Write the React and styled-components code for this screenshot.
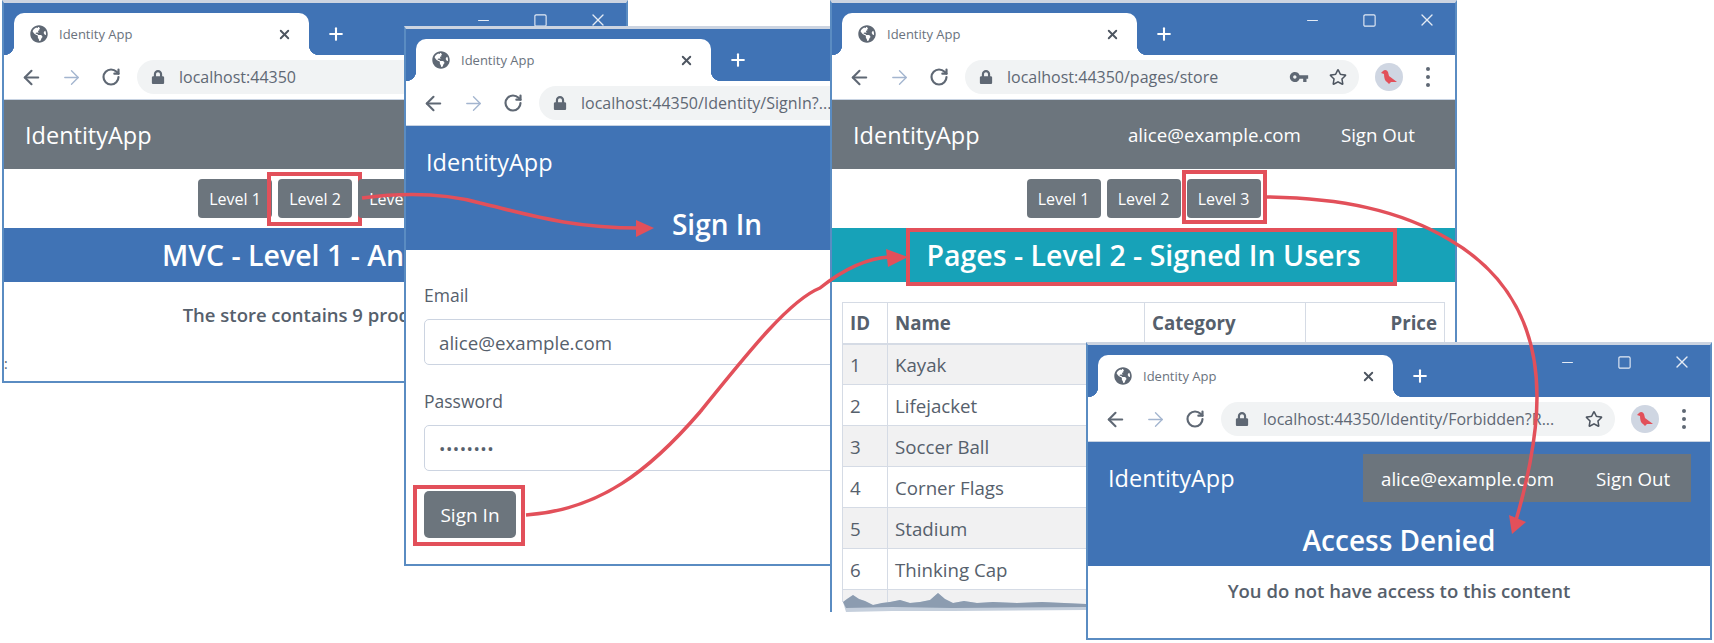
import React from 'react';
import styled, { createGlobalStyle } from 'styled-components';
import { FaGlobeAmericas, FaLock, FaRegStar } from 'react-icons/fa';
import { MdVpnKey } from 'react-icons/md';
import { ArrowLeft, ArrowRight, RotateCw, Plus, X, Minus, Square } from 'lucide-react';

const BLUE = '#4073b5';
const GRAY = '#6c757d';
const TEAL = '#17a2b8';
const TEXT = '#56606c';
const RED = '#e2505a';

const GlobalStyle = createGlobalStyle`
  html, body {
    margin: 0;
    background: #fff;
    overflow: hidden;
  }
  body {
    font-family: "Open Sans", "Noto Sans", sans-serif;
    color: ${TEXT};
  }
`;

function Bird() {
  return (
    <svg width="20" height="18" viewBox="0 0 20 18">
      <path d="M4 3 C6 1 8 2 9 4 L10 8 L18 14 L12 14 L10 16 L8 14 C6 13 5 10 5 6 L2 5 Z" fill={RED} />
    </svg>
  );
}

function Browser({ left, top, width, height, url, layer, hasProfile, hasKey, torn, children }) {
  return (
    <Window $left={left} $top={top} $width={width} $height={height} $layer={layer} $torn={torn}>
      <TitleBar>
        <Tab>
          <FaGlobeAmericas size={18} color="#5f6874" />
          <TabTitle>Identity App</TabTitle>
          <X size={15} strokeWidth={3} color="#4d5560" />
        </Tab>
        <NewTab>
          <Plus size={20} strokeWidth={2.5} color="#fff" />
        </NewTab>
        <Controls>
          <Control>
            <Minus size={17} strokeWidth={1.6} color="#e4ebf5" />
          </Control>
          <Control>
            <Square size={15} strokeWidth={1.8} color="#e4ebf5" />
          </Control>
          <Control>
            <X size={20} strokeWidth={1.6} color="#e4ebf5" />
          </Control>
        </Controls>
      </TitleBar>
      <Toolbar>
        <ToolIcon>
          <ArrowLeft size={23} strokeWidth={2.2} color="#5f6874" />
        </ToolIcon>
        <ToolIcon>
          <ArrowRight size={23} strokeWidth={1.4} color="#a3b5cf" />
        </ToolIcon>
        <ToolIcon>
          <RotateCw size={20} strokeWidth={2.6} color="#5f6874" />
        </ToolIcon>
        <Omnibox $full={!hasProfile}>
          <FaLock size={14} color="#5f6874" />
          <Url>{url}</Url>
          {hasKey && <MdVpnKey size={20} color="#5f6874" />}
          {hasProfile && (
            <StarSlot>
              <FaRegStar size={18} color="#4d5560" />
            </StarSlot>
          )}
        </Omnibox>
        {hasProfile && (
          <>
            <Avatar>
              <Bird />
            </Avatar>
            <Kebab>
              <i />
              <i />
              <i />
            </Kebab>
          </>
        )}
      </Toolbar>
      {children}
    </Window>
  );
}

function Levels({ marked }) {
  return (
    <LevelRow>
      {[1, 2, 3].map(n => (
        <LevelButton key={n}>
          Level {n}
          {marked === n && <Mark $inset={n === 2 ? '-7px -10px -8px -11px' : '-9px -6px -6px -5px'} />}
        </LevelButton>
      ))}
    </LevelRow>
  );
}

const products = ['Kayak', 'Lifejacket', 'Soccer Ball', 'Corner Flags', 'Stadium', 'Thinking Cap', ''];

const tornEdge =
  'L15 11 L21 7 L27 11 L33 13 L41 17 L50 15 L58 14 L68 12 L78 15 L88 14 L98 12 L106 5 L113 11 L121 15 L132 13 L145 15 L161 14 L185 15 L210 14 L254 16 L627 16';

export default function App() {
  return (
    <Stage>
      <GlobalStyle />

      <Browser left={2} top={0} width={626} height={383} url="localhost:44350" layer={1}>
        <NavBar $bg={GRAY}>
          <Brand>IdentityApp</Brand>
        </NavBar>
        <Levels marked={2} />
        <PageTitle $bg={BLUE} $indent={158}>MVC - Level 1 - An</PageTitle>
        <Message>The store contains 9 products</Message>
        <Stray>:</Stray>
      </Browser>

      <Browser left={404} top={26} width={626} height={540} url="localhost:44350/Identity/SignIn?..." layer={2}>
        <TallNav>
          <TallNavRow>
            <Brand>IdentityApp</Brand>
          </TallNavRow>
          <TallTitle>Sign In</TallTitle>
        </TallNav>
        <Form>
          <FieldLabel>Email</FieldLabel>
          <Field>alice@example.com</Field>
          <FieldLabel>Password</FieldLabel>
          <Field>
            <Dots>••••••••</Dots>
          </Field>
          <SubmitButton>
            Sign In
            <Mark $inset="-6px -9px -8px -11px" />
          </SubmitButton>
        </Form>
      </Browser>

      <Browser left={830} top={0} width={627} height={612} url="localhost:44350/pages/store" layer={3} hasProfile hasKey torn>
        <NavBar $bg={GRAY}>
          <Brand>IdentityApp</Brand>
          <NavLinks>
            <NavLink>alice@example.com</NavLink>
            <NavLink>Sign Out</NavLink>
          </NavLinks>
        </NavBar>
        <Levels marked={3} />
        <PageTitle $bg={TEAL}>
          <MarkedTitle>
            Pages - Level 2 - Signed In Users
            <Mark $inset="-8px -36px -12px -20px" />
          </MarkedTitle>
        </PageTitle>
        <TableWrap>
          <Table>
            <thead>
              <tr>
                <Th $w={45}>ID</Th>
                <Th $w={257}>Name</Th>
                <Th $w={161}>Category</Th>
                <Th $right>Price</Th>
              </tr>
            </thead>
            <tbody>
              {products.map((name, i) => (
                <tr key={i}>
                  <Td $odd={i % 2 === 0}>{name && i + 1}</Td>
                  <Td $odd={i % 2 === 0}>{name}</Td>
                  <Td $odd={i % 2 === 0} />
                  <Td $odd={i % 2 === 0} />
                </tr>
              ))}
            </tbody>
          </Table>
        </TableWrap>
        <Torn width="627" height="24" viewBox="0 0 627 24">
          <path d={`M0 24 L0 14 L11 14 ${tornEdge} L627 24 Z`} fill="#fff" />
          <path d={`M11 14 ${tornEdge} L627 23 L254 22 L120 23 L60 23 L14 24 Z`} fill="#c5cfdc" />
          <path d={`M11 14 ${tornEdge} L627 20 L254 19 L120 20 L60 19 L14 20 Z`} fill="#8c9cb0" />
        </Torn>
      </Browser>

      <Browser
        left={1086}
        top={342}
        width={626}
        height={298}
        url="localhost:44350/Identity/Forbidden?R..."
        layer={4}
        hasProfile
      >
        <TallNav>
          <TallNavRow>
            <Brand>IdentityApp</Brand>
            <GrayLinks>
              <NavLink>alice@example.com</NavLink>
              <NavLink>Sign Out</NavLink>
            </GrayLinks>
          </TallNavRow>
          <TallTitle>Access Denied</TallTitle>
        </TallNav>
        <Message $tight>You do not have access to this content</Message>
      </Browser>

      <Arrows width="1714" height="643" viewBox="0 0 1714 643">
        <g fill="none" stroke={RED} strokeWidth="3.5">
          <path d="M362 198 C400 193 440 192 480 203 C530 215 570 228 640 228" />
          <path d="M526 515 C600 510 650 470 700 412 C750 350 790 300 820 288 C845 268 870 258 890 257" />
          <path d="M1267 197 C1340 198 1400 210 1450 240 C1510 275 1537 330 1537 397 C1537 440 1525 490 1516 520" />
        </g>
        <g fill={RED}>
          <polygon points="636,220 654,228 636,237" />
          <polygon points="886,249 908,257 888,267" />
          <polygon points="1509,515 1526,522 1512,534" />
        </g>
      </Arrows>
    </Stage>
  );
}

const Stage = styled.div`
  position: relative;
  width: 1714px;
  height: 643px;
  overflow: hidden;
  background: #fff;
`;

const Window = styled.div`
  position: absolute;
  left: ${p => p.$left}px;
  top: ${p => p.$top}px;
  width: ${p => p.$width}px;
  height: ${p => p.$height}px;
  z-index: ${p => p.$layer};
  box-sizing: border-box;
  display: flex;
  flex-direction: column;
  overflow: hidden;
  background: #fff;
  border: 2px solid #5a8cc2;
  border-top: 3px solid #ccd4e1;
  border-bottom-width: ${p => (p.$torn ? 0 : 2)}px;
`;

const TitleBar = styled.div`
  display: flex;
  align-items: flex-end;
  flex: none;
  height: 52px;
  padding-left: 10px;
  background: ${BLUE};
`;

const Tab = styled.div`
  position: relative;
  display: flex;
  align-items: center;
  box-sizing: border-box;
  width: 295px;
  height: 42px;
  padding: 0 17px 0 16px;
  background: #fff;
  border-radius: 10px 10px 0 0;

  &::before,
  &::after {
    content: '';
    position: absolute;
    bottom: 0;
    width: 10px;
    height: 10px;
  }
  &::before {
    left: -10px;
    background: radial-gradient(circle at 0 0, ${BLUE} 10px, #fff 10.5px);
  }
  &::after {
    right: -10px;
    background: radial-gradient(circle at 100% 0, ${BLUE} 10px, #fff 10.5px);
  }
`;

const TabTitle = styled.span`
  flex: 1;
  margin-left: 11px;
  font-size: 13px;
  color: #6a727d;
`;

const NewTab = styled.div`
  display: flex;
  align-items: center;
  height: 42px;
  margin-left: 17px;
`;

const Controls = styled.div`
  display: flex;
  align-self: flex-start;
  margin-left: auto;
`;

const Control = styled.div`
  display: flex;
  align-items: center;
  justify-content: center;
  width: 57px;
  height: 34px;
`;

const Toolbar = styled.div`
  display: flex;
  align-items: center;
  flex: none;
  height: 45px;
  padding-left: 7px;
  background: #fff;
  border-bottom: 1px solid #c8d3e2;
  box-sizing: border-box;
`;

const ToolIcon = styled.div`
  display: flex;
  justify-content: center;
  width: 40px;
`;

const Omnibox = styled.div`
  display: flex;
  align-items: center;
  box-sizing: border-box;
  flex: ${p => (p.$full ? '1' : 'none')};
  width: 394px;
  height: 34px;
  margin-left: 6px;
  padding: 0 12px 0 14px;
  background: #f1f3f4;
  border-radius: 17px;
`;

const Url = styled.span`
  flex: 1;
  margin-left: 14px;
  font-size: 16px;
  white-space: nowrap;
  color: #5f6874;
`;

const StarSlot = styled.div`
  display: flex;
  margin-left: 20px;
`;

const Avatar = styled.div`
  display: flex;
  align-items: center;
  justify-content: center;
  width: 28px;
  height: 28px;
  margin-left: 16px;
  background: #cfd6e2;
  border-radius: 50%;
`;

const Kebab = styled.div`
  display: flex;
  flex-direction: column;
  gap: 4px;
  margin-left: 23px;

  i {
    display: block;
    width: 4px;
    height: 4px;
    border-radius: 50%;
    background: #5f6874;
  }
`;

const NavBar = styled.div`
  display: flex;
  align-items: center;
  flex: none;
  height: 69px;
  padding: 0 21px;
  background: ${p => p.$bg};
`;

const Brand = styled.span`
  font-size: 23.5px;
  color: #fff;
`;

const NavLinks = styled.div`
  display: flex;
  gap: 40px;
  margin-left: auto;
  margin-right: 19px;
`;

const NavLink = styled.span`
  font-size: 18.7px;
  color: #fff;
`;

const LevelRow = styled.div`
  display: flex;
  justify-content: center;
  align-items: center;
  gap: 6px;
  flex: none;
  height: 59px;
`;

const LevelButton = styled.div`
  position: relative;
  display: flex;
  align-items: center;
  justify-content: center;
  width: 74px;
  height: 39px;
  font-size: 16px;
  color: #fff;
  background: ${GRAY};
  border-radius: 4px;
`;

const Mark = styled.span`
  position: absolute;
  inset: ${p => p.$inset};
  border: 4px solid ${RED};
`;

const PageTitle = styled.div`
  display: flex;
  align-items: center;
  justify-content: ${p => (p.$indent ? 'flex-start' : 'center')};
  flex: none;
  height: 54px;
  padding-left: ${p => p.$indent || 0}px;
  font-size: 28.5px;
  font-weight: 600;
  color: #fff;
  white-space: nowrap;
  background: ${p => p.$bg};
`;

const MarkedTitle = styled.span`
  position: relative;
`;

const Message = styled.p`
  margin: ${p => (p.$tight ? '12px' : '20px')} 0 0;
  font-size: 18.5px;
  font-weight: 600;
  text-align: center;
  color: ${TEXT};
`;

const Stray = styled.span`
  margin-top: 30px;
  font-size: 14px;
  line-height: 14px;
`;

const TallNav = styled.div`
  display: flex;
  flex-direction: column;
  flex: none;
  height: 124px;
  padding-bottom: 9px;
  box-sizing: border-box;
  background: ${BLUE};
`;

const TallNavRow = styled.div`
  display: flex;
  align-items: center;
  justify-content: space-between;
  height: 72px;
  padding: 0 19px 0 20px;
`;

const GrayLinks = styled.div`
  display: flex;
  align-items: center;
  gap: 42px;
  box-sizing: border-box;
  width: 328px;
  height: 48px;
  padding: 0 18px;
  white-space: nowrap;
  background: ${GRAY};
`;

const TallTitle = styled.div`
  margin-top: auto;
  font-size: 28px;
  font-weight: 600;
  line-height: 34px;
  text-align: center;
  color: #fff;
`;

const Form = styled.div`
  display: flex;
  flex-direction: column;
  align-items: flex-start;
  padding: 34px 18px 0;
`;

const FieldLabel = styled.label`
  font-size: 17.5px;
  line-height: 22px;
  color: ${TEXT};
`;

const Field = styled.div`
  display: flex;
  align-items: center;
  box-sizing: border-box;
  width: 100%;
  height: 46px;
  margin: 13px 0 25px;
  padding: 0 14px;
  font-size: 18.7px;
  color: ${TEXT};
  border: 1px solid #ccd4e1;
  border-radius: 5px;
`;

const Dots = styled.span`
  font-size: 17px;
  letter-spacing: 0.5px;
`;

const SubmitButton = styled.div`
  position: relative;
  display: flex;
  align-items: center;
  justify-content: center;
  width: 92px;
  height: 47px;
  margin-top: -5px;
  font-size: 19px;
  color: #fff;
  background: ${GRAY};
  border-radius: 5px;
`;

const TableWrap = styled.div`
  padding: 20px 10px 0;
`;

const Table = styled.table`
  width: 603px;
  table-layout: fixed;
  border-collapse: collapse;
  font-size: 18.7px;
  color: ${TEXT};
`;

const Th = styled.th`
  box-sizing: border-box;
  width: ${p => (p.$w ? `${p.$w}px` : 'auto')};
  height: 41px;
  padding: 0 7px;
  text-align: ${p => (p.$right ? 'right' : 'left')};
  border: 1px solid #d5dbe5;
  border-bottom-width: 2px;
`;

const Td = styled.td`
  box-sizing: border-box;
  height: 41px;
  padding: 0 7px;
  background: ${p => (p.$odd ? '#f1f1f2' : '#fff')};
  border: 1px solid #d5dbe5;
`;

const Torn = styled.svg`
  position: absolute;
  left: 0;
  bottom: 0;
`;

const Arrows = styled.svg`
  position: absolute;
  left: 0;
  top: 0;
  z-index: 5;
  pointer-events: none;
`;
